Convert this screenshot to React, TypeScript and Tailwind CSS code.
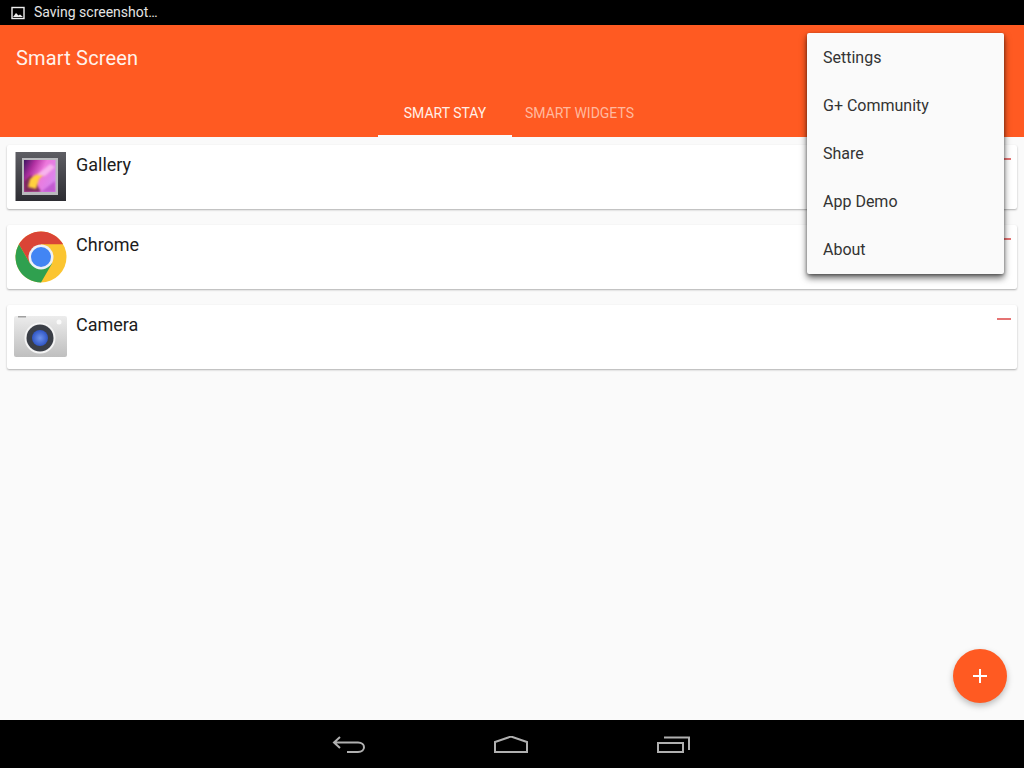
const apps = ["Gallery", "Chrome", "Camera"];
const menuItems = ["Settings", "G+ Community", "Share", "App Demo", "About"];

function GalleryIcon() {
  return (
    <svg width="52" height="52" viewBox="0 0 52 52">
      <defs>
        <linearGradient id="gal" x1="0" y1="0" x2="1" y2="0.5">
          <stop offset="0" stopColor="#3d1560" />
          <stop offset="0.3" stopColor="#b02fa0" />
          <stop offset="0.6" stopColor="#ee78dc" />
          <stop offset="1" stopColor="#dc86ec" />
        </linearGradient>
        <linearGradient id="galBg" x1="0" y1="0" x2="0" y2="1">
          <stop offset="0" stopColor="#5e5e64" />
          <stop offset="1" stopColor="#2c2c32" />
        </linearGradient>
        <clipPath id="photo">
          <rect x="9" y="9" width="31.5" height="32" />
        </clipPath>
        <filter id="soft" x="-30%" y="-30%" width="160%" height="160%">
          <feGaussianBlur stdDeviation="1.2" />
        </filter>
      </defs>
      <rect x="0.5" y="1" width="50.5" height="49" fill="url(#galBg)" />
      <rect x="7" y="7" width="36" height="37" fill="#b9b9bd" />
      <rect x="9" y="9" width="31.5" height="32" fill="url(#gal)" />
      <g clipPath="url(#photo)">
        <path d="M9 41 L9 30 L16 24 L26 41 Z" fill="#7a2a5c" filter="url(#soft)" />
        <path d="M13 36 L15 28 L20 24 L30 22 L24 28 L21 38 Z" fill="#ffd03c" filter="url(#soft)" />
        <path d="M22 24 L35 13 L40 16 L30 25 Z" fill="#f8b4ee" filter="url(#soft)" />
        <path d="M26 41 L40 30 L41 41 Z" fill="#c25cd0" filter="url(#soft)" />
      </g>
    </svg>
  );
}

function ChromeIcon() {
  return (
    <svg width="52" height="52" viewBox="0 0 52 52">
      <circle cx="26" cy="26" r="25.5" fill="#fbc531" />
      <path d="M48.1 13.25 A25.5 25.5 0 0 0 3.9 13.25 L14.95 32.4 L26 26 L26 13.25 Z" fill="#da4436" />
      <path d="M3.9 13.25 A25.5 25.5 0 0 0 26 51.5 L37.05 32.4 L26 26 L14.95 32.4 Z" fill="#2fa04f" />
      <circle cx="26" cy="26" r="12.5" fill="#eef1f6" />
      <circle cx="26" cy="26" r="10" fill="#4285f4" />
    </svg>
  );
}

function CameraIcon() {
  return (
    <svg width="54" height="44" viewBox="0 0 54 44">
      <defs>
        <linearGradient id="cam" x1="0" y1="0" x2="0" y2="1">
          <stop offset="0" stopColor="#ececec" />
          <stop offset="1" stopColor="#bfbfbf" />
        </linearGradient>
        <radialGradient id="lens">
          <stop offset="0" stopColor="#6e93ec" />
          <stop offset="1" stopColor="#2f55c4" />
        </radialGradient>
      </defs>
      <rect x="0" y="1" width="53" height="41" rx="2" fill="url(#cam)" />
      <rect x="4" y="1" width="8" height="1.5" fill="#a0a0a0" />
      <circle cx="45" cy="7" r="2.5" fill="#fafafa" />
      <circle cx="26" cy="23" r="15.5" fill="#f4f4f4" />
      <circle cx="26" cy="23" r="13.5" fill="#3a3e46" />
      <circle cx="26" cy="23" r="8" fill="url(#lens)" />
    </svg>
  );
}

const icons: Record<string, React.ReactNode> = {
  Gallery: <GalleryIcon />,
  Chrome: <ChromeIcon />,
  Camera: <CameraIcon />,
};

export default function App() {
  return (
    <div className="relative flex h-[768px] w-[1024px] flex-col overflow-hidden bg-[#fafafa] font-['Roboto',sans-serif]">
      {/* Status bar */}
      <div className="flex h-[25px] shrink-0 items-center bg-black pl-[11px] text-[14px] text-[#e4e4e4]">
        <svg width="14" height="14" viewBox="0 0 14 14" className="mr-[9px]">
          <rect x="1" y="1.5" width="12" height="11" fill="none" stroke="#eee" strokeWidth="1.4" />
          <path d="M2 11 L5 7 L7.5 9.5 L9 8.5 L12 11 Z" fill="#eee" />
        </svg>
        Saving screenshot…
      </div>

      {/* App bar with tabs */}
      <div className="flex h-[112px] shrink-0 flex-col bg-[#ff5a22]">
        <div className="flex-1 pl-4 pt-[18px] text-[20px] leading-[30px] tracking-[0.17px] text-[#fff3ec]">Smart Screen</div>
        <div className="flex h-[48px] justify-center">
          <div className="flex w-[134px] items-center justify-center border-b-2 border-[#fafafa] pt-[2px] text-[14px] text-[#fff0e8]">
            SMART STAY
          </div>
          <div className="flex w-[134px] items-center justify-center border-b-2 border-transparent pl-[1px] pt-[2px] text-[14px] text-[#ffb99f]">
            SMART WIDGETS
          </div>
        </div>
      </div>

      {/* App list */}
      <div className="flex flex-1 flex-col gap-4 px-[7px] pt-2">
        {apps.map((name) => (
          <div
            key={name}
            className="relative flex h-[64px] rounded-[2px] bg-white pl-[7px] shadow-[0_1px_2px_rgba(0,0,0,0.3)]"
          >
            <div className="flex h-full w-[54px] items-center justify-center">{icons[name]}</div>
            <div className="pl-[8px] pt-[7px] text-[18px] leading-[26px] text-[#1c1c1c]">{name}</div>
            <div className="absolute right-[6px] top-[13px] h-[2px] w-[14px] bg-[#e57373]" />
          </div>
        ))}
      </div>

      {/* Nav bar */}
      <div className="flex h-[48px] shrink-0 items-center justify-center bg-black">
        <svg width="36" height="20" viewBox="0 0 36 20" className="mt-[4px]" fill="none" stroke="#b0b0b0" strokeWidth="2">
          <path d="M8 1 L2 6.5 L8 12 M2 6.5 H26 C34 6.5 34 16 26 16 H15" />
        </svg>
        <svg width="36" height="20" viewBox="0 0 36 20" className="ml-[125px] mt-[4px]" fill="none" stroke="#b0b0b0" strokeWidth="2">
          <path d="M2 16 V6 L18 0.5 L34 6 V16 Z" />
        </svg>
        <svg width="36" height="20" viewBox="0 0 36 20" className="ml-[127px] mt-[4px]" fill="none" stroke="#b0b0b0" strokeWidth="2">
          <path d="M2 7 H27 V16 H2 Z M8 1.5 H33 V14" />
        </svg>
      </div>

      {/* Floating add button */}
      <div className="absolute left-[953px] top-[649px] flex h-[54px] w-[54px] items-center justify-center rounded-full bg-[#ff5a22] shadow-[0_3px_6px_rgba(0,0,0,0.25)]">
        <svg width="16" height="16" viewBox="0 0 16 16" stroke="#fff" strokeWidth="2">
          <path d="M8 1 V15 M1 8 H15" />
        </svg>
      </div>

      {/* Overflow menu */}
      <div className="absolute left-[807px] top-[33px] w-[197px] rounded-[2px] bg-[#fafafa] py-[0.5px] shadow-[0_4px_7px_rgba(0,0,0,0.6),0_1px_3px_rgba(0,0,0,0.35)]">
        {menuItems.map((item) => (
          <div key={item} className="flex h-[48px] items-center pl-4 text-[16px] text-[#333]">
            {item}
          </div>
        ))}
      </div>
    </div>
  );
}
